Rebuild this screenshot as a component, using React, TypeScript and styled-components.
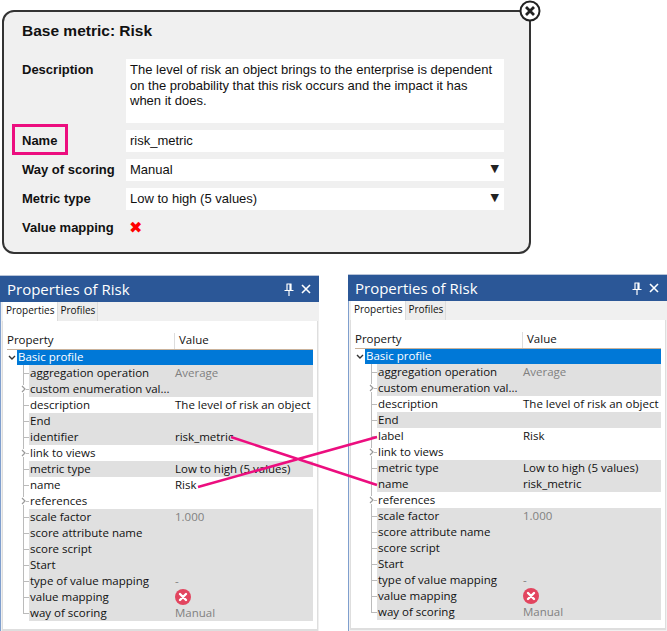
import React from "react"
import styled, {createGlobalStyle} from "styled-components"

const GlobalStyle = createGlobalStyle`
  html, body {
    margin: 0;
    padding: 0;
    background: #fff;
  }
`

const Page = styled.div`
  position: relative;
  width: 667px;
  height: 631px;
  overflow: hidden;
  background: #fff;
`

const Card = styled.div`
  position: relative;
  box-sizing: border-box;
  width: 529px;
  height: 244px;
  margin: 10px 0 0 2px;
  padding: 10px 0 0 18px;
  background: #f0f0f0;
  border: 2px solid #333;
  border-radius: 12px;
  font-family: "Liberation Sans", Arial, sans-serif;
  color: #111;
`

const CardTitle = styled.div`
  font-size: 15.5px;
  font-weight: bold;
  line-height: 18px;
  margin-bottom: 19px;
`

const Form = styled.div`
  display: grid;
  grid-template-columns: 104px 378px;
  row-gap: 7px;
`

const Label = styled.div<{$highlight?: boolean; $tall?: boolean}>`
  position: relative;
  font-size: 13px;
  font-weight: bold;
  line-height: ${(p) => (p.$tall ? "15.5px" : "22px")};
  padding-top: ${(p) => (p.$tall ? "3px" : "0")};
  ${(p) =>
    p.$highlight &&
    `&::before {
      content: "";
      position: absolute;
      left: -10px;
      top: -6px;
      width: 50px;
      height: 25px;
      border: 3px solid #ec0e7f;
    }`}
`

const Field = styled.div<{$tall?: boolean}>`
  position: relative;
  box-sizing: border-box;
  background: #fff;
  height: ${(p) => (p.$tall ? "64px" : "22px")};
  padding: ${(p) => (p.$tall ? "3px 4px 0" : "0 4px")};
  font-size: 13px;
  line-height: ${(p) => (p.$tall ? "15.5px" : "22px")};
`

const DropArrow = styled.span`
  position: absolute;
  right: 5px;
  top: -1px;
  font-family: "DejaVu Sans", sans-serif;
  font-size: 11px;
  color: #222;
`

const RedCross = styled.div`
  font-family: "DejaVu Sans", sans-serif;
  font-size: 16px;
  line-height: 22px;
  color: #f00;
  padding-left: 3px;
`

const CloseBadge = styled.svg`
  position: absolute;
  right: -12px;
  top: -12px;
`

const Panels = styled.div`
  display: flex;
  gap: 29px;
  margin-top: 20px;
`

const Panel = styled.div<{$offset: number}>`
  box-sizing: border-box;
  width: 319px;
  height: 357px;
  margin-top: ${(p) => p.$offset}px;
  background: #f0f0f0;
  border-left: 1px solid #7f9fce;
  font-family: "Open Sans", "Noto Sans", sans-serif;
  color: #111;
  display: flex;
  flex-direction: column;
`

const TitleBar = styled.div`
  display: flex;
  align-items: center;
  height: 27px;
  margin-left: -1px;
  padding: 0 8px 0 7px;
  background: #2b5797;
  color: #fff;
  font-size: 15px;
  border-top: 1px solid #b8c4d8;
  box-sizing: border-box;
`

const TitleText = styled.div`
  flex: 1;
`

const TitleIcons = styled.div`
  display: flex;
  align-items: center;
  gap: 7px;
`

const Tabs = styled.div`
  display: flex;
  height: 19px;
  padding-left: 2px;
  font-size: 10px;
  line-height: 17px;
`

const Tab = styled.div<{$active?: boolean}>`
  padding: 0 ${(p) => (p.$active ? "3px" : "2px")};
  background: ${(p) => (p.$active ? "#fff" : "#ededed")};
  border-right: 1px solid #ddd;
`

const PanelBody = styled.div`
  flex: 1;
  margin: 0 1px 1px 1px;
  padding: 12px 4px 0 4px;
  background: #fff;
  border: 1px solid #dedede;
  border-bottom-width: 2px;
  border-top: none;
  font-size: 11.5px;
`

const ColumnHead = styled.div`
  display: grid;
  grid-template-columns: 167px 1fr;
  height: 16px;
  line-height: 13px;
  border-bottom: 1px solid #c9b29b;
`

const HeadCell = styled.div<{$divided?: boolean}>`
  ${(p) => p.$divided && "border-left: 1px solid #ddd; padding-left: 4px;"}
`

const GroupRow = styled.div`
  position: relative;
  height: 15px;
  line-height: 13px;
  margin-left: 10px;
  padding-left: 1px;
  background: #0078d7;
  color: #fff;
`

const Chevron = styled.svg`
  position: absolute;
  left: -9px;
  top: 5px;
`

const Rows = styled.div`
  position: relative;
  padding-left: 22px;

  &::before {
    content: "";
    position: absolute;
    left: 16px;
    top: 0;
    bottom: 8px;
    border-left: 1px solid #bbb;
  }
`

const Row = styled.div<{$shaded?: boolean}>`
  position: relative;
  display: grid;
  grid-template-columns: 145px 1fr;
  height: 16px;
  line-height: 15px;
  padding-left: 1px;
  background: ${(p) => (p.$shaded ? "#e0e0e0" : "#fff")};
  white-space: nowrap;

  &::before {
    content: "";
    position: absolute;
    left: -6px;
    top: 8px;
    width: 6px;
    border-top: 1px solid #bbb;
  }
`

const Expander = styled.svg`
  position: absolute;
  left: -8px;
  top: 4px;
  background: #fff;
  z-index: 1;
`

const Value = styled.div<{$muted?: boolean}>`
  color: ${(p) => (p.$muted ? "#808080" : "#111")};
`

const Overlay = styled.svg`
  position: absolute;
  left: 0;
  top: 0;
  pointer-events: none;
`

type RowData = {
  name: string
  value?: string
  muted?: boolean
  shaded?: boolean
  expand?: boolean
  error?: boolean
}

const buildRows = (third: RowData, name: RowData): RowData[] => [
  {name: "aggregation operation", value: "Average", muted: true, shaded: true},
  {name: "custom enumeration val...", shaded: true, expand: true},
  {name: "description", value: "The level of risk an object"},
  {name: "End", shaded: true},
  third,
  {name: "link to views", expand: true},
  {name: "metric type", value: "Low to high (5 values)", shaded: true},
  name,
  {name: "references", expand: true},
  {name: "scale factor", value: "1.000", muted: true, shaded: true},
  {name: "score attribute name", shaded: true},
  {name: "score script", shaded: true},
  {name: "Start", shaded: true},
  {name: "type of value mapping", value: "-", muted: true, shaded: true},
  {name: "value mapping", error: true, shaded: true},
  {name: "way of scoring", value: "Manual", muted: true, shaded: true},
]

const ErrorIcon = () => (
  <svg width="16" height="16" viewBox="0 0 16 16" style={{display: "block"}}>
    <circle cx="8" cy="8" r="8" fill="#e2455f" />
    <path d="M5 5l6 6M11 5l-6 6" stroke="#fff" strokeWidth="2.4" strokeLinecap="round" />
  </svg>
)

const PinIcon = () => (
  <svg width="10" height="13" viewBox="0 0 10 13">
    <path d="M2.5 1h5M3 1v6M7 1v6M6 1v6M0.5 7.5h9M5 8v5" stroke="#fff" strokeWidth="1.2" fill="none" />
  </svg>
)

const PropertiesPanel: React.FC<{rows: RowData[]; offset: number}> = ({rows, offset}) => (
  <Panel $offset={offset}>
    <TitleBar>
      <TitleText>Properties of Risk</TitleText>
      <TitleIcons>
        <PinIcon />
        <svg width="10" height="10" viewBox="0 0 10 10">
          <path d="M1 1l8 8M9 1l-8 8" stroke="#fff" strokeWidth="1.6" />
        </svg>
      </TitleIcons>
    </TitleBar>
    <Tabs>
      <Tab $active>Properties</Tab>
      <Tab>Profiles</Tab>
    </Tabs>
    <PanelBody>
      <ColumnHead>
        <HeadCell>Property</HeadCell>
        <HeadCell $divided>Value</HeadCell>
      </ColumnHead>
      <GroupRow>
        <Chevron width="8" height="5" viewBox="0 0 8 5">
          <path d="M1 1l3 3 3-3" stroke="#333" strokeWidth="1.4" fill="none" />
        </Chevron>
        Basic profile
      </GroupRow>
      <Rows>
        {rows.map((row) => (
          <Row key={row.name} $shaded={row.shaded}>
            {row.expand && (
              <Expander width="5" height="8" viewBox="0 0 5 8">
                <path d="M1 1l3 3-3 3" stroke="#999" strokeWidth="1.2" fill="none" />
              </Expander>
            )}
            <div>{row.name}</div>
            {row.error ? <ErrorIcon /> : <Value $muted={row.muted}>{row.value}</Value>}
          </Row>
        ))}
      </Rows>
    </PanelBody>
  </Panel>
)

const leftRows = buildRows(
  {name: "identifier", value: "risk_metric", shaded: true},
  {name: "name", value: "Risk"}
)
const rightRows = buildRows(
  {name: "label", value: "Risk"},
  {name: "name", value: "risk_metric", shaded: true}
)

export default function App() {
  return (
    <Page>
      <GlobalStyle />
      <Card>
        <CloseBadge width="22" height="22" viewBox="0 0 22 22">
          <circle cx="11" cy="11" r="9.5" fill="#fff" stroke="#222" strokeWidth="2" />
          <path d="M7 7l8 8M15 7l-8 8" stroke="#222" strokeWidth="2.8" />
        </CloseBadge>
        <CardTitle>Base metric: Risk</CardTitle>
        <Form>
          <Label $tall>Description</Label>
          <Field $tall>
            The level of risk an object brings to the enterprise is dependent on the probability
            that this risk occurs and the impact it has when it does.
          </Field>
          <Label $highlight>Name</Label>
          <Field>risk_metric</Field>
          <Label>Way of scoring</Label>
          <Field>
            Manual
            <DropArrow>▼</DropArrow>
          </Field>
          <Label>Metric type</Label>
          <Field>
            Low to high (5 values)
            <DropArrow>▼</DropArrow>
          </Field>
          <Label>Value mapping</Label>
          <RedCross>✖</RedCross>
        </Form>
      </Card>
      <Panels>
        <PropertiesPanel rows={leftRows} offset={1} />
        <PropertiesPanel rows={rightRows} offset={0} />
      </Panels>
      <Overlay width="667" height="631">
        <path d="M231 437L377 485M198 487L377 437" stroke="#ec0e7f" strokeWidth="2.5" fill="none" />
      </Overlay>
    </Page>
  )
}
